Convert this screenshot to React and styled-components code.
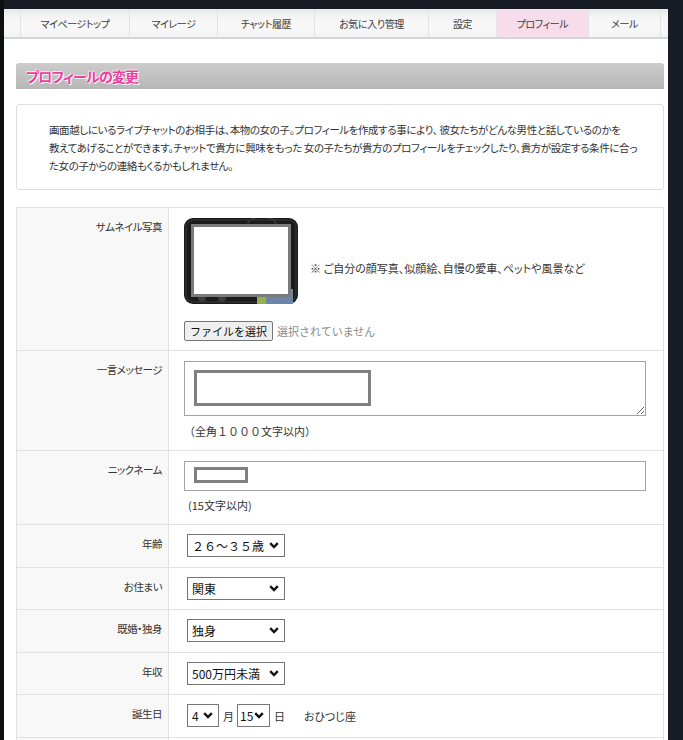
import React from "react";
import styled, { createGlobalStyle } from "styled-components";

const Global = createGlobalStyle`
  html, body { margin: 0; padding: 0; background: #161b24; }
  body { font-family: "Noto Sans CJK JP", "Noto Sans", sans-serif; color: #333; }
  * { box-sizing: border-box; }
`;

const chevron =
  "url(\"data:image/svg+xml;utf8,<svg xmlns='http://www.w3.org/2000/svg' width='10' height='7' viewBox='0 0 10 7'><path d='M1.2 1.2 L5 5 L8.8 1.2' fill='none' stroke='%23111' stroke-width='2.4'/></svg>\")";

const Frame = styled.div`
  min-height: 740px;
  padding: 9px 15px 0 4px;
  background: linear-gradient(to right, #0e0f12 0, #0e0f12 4px, #161b24 4px);
`;

const Page = styled.div`
  background: #fff;
  width: 664px;
  min-height: 731px;
`;

const Nav = styled.nav`
  display: flex;
  height: 30px;
  padding-left: 16px;
  background: linear-gradient(#e6e8ea 0, #f3f3f3 25%, #f8f8f8 60%, #f4f4f4 100%);
  border-bottom: 2px solid #d3d7db;
`;

const Tab = styled.a`
  display: flex;
  align-items: center;
  justify-content: center;
  width: ${(p) => p.$w}px;
  border-left: 1px solid #e3e3e3;
  ${(p) => (p.$last ? "border-right: 1px solid #e3e3e3;" : "")}
  background: ${(p) => (p.$active ? "#f7dcec" : "transparent")};
  font-size: 10px;
  letter-spacing: -0.4px;
  color: #444;
  text-decoration: none;
  font-feature-settings: "palt";
  text-shadow: 0 0 1px rgba(0, 0, 0, 0.08);
`;

const Content = styled.div`
  padding: 24px 4px 0 12px;
`;

const TitleBar = styled.h2`
  margin: 0;
  height: 26px;
  line-height: 26px;
  padding-left: 10px;
  border-radius: 3px 3px 0 0;
  background: linear-gradient(#cbcbcb, #b7b7b7);
  font-size: 14px;
  font-weight: bold;
  letter-spacing: -0.8px;
  color: #ef3c9e;
  font-feature-settings: "palt";
  text-shadow: 0 0 1px #fff, 0 0 1px #fff, 1px 1px 0 #fff, -1px -1px 0 rgba(255,255,255,0.6);
`;

const Intro = styled.div`
  margin-top: 15px;
  border: 1px solid #dedede;
  border-radius: 3px;
  padding: 16px 20px 14px 32px;
  font-size: 10.5px;
  letter-spacing: -0.4px;
  line-height: 18px;
  color: #333;
  font-feature-settings: "palt";
  white-space: nowrap;
`;

const FormTable = styled.div`
  margin-top: 17px;
  border: 1px solid #e0e0e0;
  border-top: none;
`;

const Row = styled.div`
  display: grid;
  grid-template-columns: 152px 1fr;
  border-top: 1px solid #e2e2e2;
`;

const Label = styled.div`
  background: #f8f8f8;
  border-right: 1px solid #e2e2e2;
  text-align: right;
  padding: 12px 6px 0 0;
  font-size: 10.5px;
  letter-spacing: -0.5px;
  line-height: 14px;
  color: #333;
  font-feature-settings: "palt";
`;

const Value = styled.div`
  padding: ${(p) => p.$pad};
  font-size: 11px;
  color: #333;
`;

const PhotoLine = styled.div`
  display: flex;
  align-items: center;
`;

const PhotoNote = styled.span`
  margin-left: 12px;
  margin-top: 14px;
  font-size: 11px;
  font-feature-settings: "palt";
`;

const FileLine = styled.div`
  margin-top: 17px;
  display: flex;
  align-items: center;
  height: 20px;
`;

const FileButton = styled.button`
  height: 20px;
  padding: 0 5px;
  border: 1px solid #767676;
  border-radius: 2px;
  background: #efefef;
  font-family: inherit;
  font-size: 11px;
  line-height: 18px;
  color: #111;
`;

const FileStatus = styled.span`
  margin-left: 4px;
  font-size: 11px;
  color: #8a8a8a;
`;

const FieldWrap = styled.div`
  position: relative;
  width: 462px;
`;

const TextArea = styled.textarea`
  display: block;
  width: 100%;
  height: 55px;
  border: 1px solid #a3a3a3;
  border-radius: 0;
  font-family: inherit;
  resize: vertical;
`;

const TextInput = styled.input`
  display: block;
  width: 100%;
  height: 30px;
  border: 1px solid #a3a3a3;
  border-radius: 0;
  font-family: inherit;
`;

const Redact = styled.div`
  position: absolute;
  left: ${(p) => p.$l}px;
  top: ${(p) => p.$t}px;
  width: ${(p) => p.$w}px;
  height: ${(p) => p.$h}px;
  border: 3px solid #808080;
  background: #fff;
`;

const Note = styled.div`
  margin-top: ${(p) => p.$mt}px;
  padding-left: ${(p) => p.$pl || 0}px;
  font-size: 11px;
  line-height: 14px;
`;

const Select = styled.select`
  appearance: none;
  -webkit-appearance: none;
  height: 23px;
  width: ${(p) => p.$w}px;
  margin-left: ${(p) => p.$ml ?? 3}px;
  border: 1px solid #767676;
  border-radius: 0;
  background: #fff ${chevron} no-repeat right 5px center / 10px 7px;
  font-family: "Noto Sans CJK JP", "Noto Sans", sans-serif;
  font-size: 12px;
  color: #111;
  padding: 0 0 0 ${(p) => p.$pl ?? 4}px;
`;

const DateLine = styled.div`
  display: flex;
  align-items: center;
  font-size: 11px;
`;

const Unit = styled.span`
  margin: 0 3px 0 4px;
`;

const Sign = styled.span`
  margin-left: 16px;
  font-feature-settings: "palt";
`;

const Photo = () => (
  <svg width="114" height="86" viewBox="0 0 114 86">
    <rect x="0" y="0" width="114" height="86" rx="9" fill="#1b1b1b" />
    <rect x="2" y="2" width="110" height="82" rx="8" fill="none" stroke="#2a2a2a" strokeWidth="2" />
    <ellipse cx="78" cy="6" rx="14" ry="7" fill="none" stroke="#3a3a3a" strokeWidth="1.5" />
    <rect x="82" y="71" width="27" height="15" fill="#6c84a6" />
    <rect x="73" y="79" width="9" height="7" fill="#93b34a" />
    <circle cx="18" cy="80" r="4" fill="#3c3c3c" />
    <circle cx="38" cy="80" r="4" fill="#3c3c3c" />
    <rect x="8.5" y="7.5" width="97" height="70" fill="#fff" stroke="#7b7b7b" strokeWidth="3" />
  </svg>
);

const tabs = [
  ["マイページトップ", 109],
  ["マイレージ", 88],
  ["チャット履歴", 97],
  ["お気に入り管理", 114],
  ["設定", 68],
  ["プロフィール", 92, true],
  ["メール", 73],
];

const TALL = "10px 16px 12px 15px";
const COMPACT = "9px 15px 9.6px 15px";

export default function App() {
  return (
    <>
      <Global />
      <Frame>
        <Page>
          <Nav>
            {tabs.map(([t, w, a], i) => (
              <Tab key={t} $w={w} $active={a} $last={i === tabs.length - 1} href="#">
                {t}
              </Tab>
            ))}
          </Nav>
          <Content>
            <TitleBar>プロフィールの変更</TitleBar>
            <Intro>
              画面越しにいるライブチャットのお相手は、本物の女の子。プロフィールを作成する事により、 彼女たちがどんな男性と話しているのかを
              <br />
              教えてあげることができます。チャットで貴方に興味をもった 女の子たちが貴方のプロフィールをチェックしたり、貴方が設定する条件に合っ
              <br />
              た女の子からの連絡もくるかもしれません。
            </Intro>
            <FormTable>
              <Row>
                <Label>サムネイル写真</Label>
                <Value $pad="10px 16px 9px 15px">
                  <PhotoLine>
                    <Photo />
                    <PhotoNote>※ ご自分の顔写真、似顔絵、自慢の愛車、ペットや風景など</PhotoNote>
                  </PhotoLine>
                  <FileLine>
                    <FileButton type="button">ファイルを選択</FileButton>
                    <FileStatus>選択されていません</FileStatus>
                  </FileLine>
                </Value>
              </Row>
              <Row>
                <Label>一言メッセージ</Label>
                <Value $pad={TALL}>
                  <FieldWrap>
                    <TextArea defaultValue="" />
                    <Redact $l={10} $t={9} $w={177} $h={36} />
                  </FieldWrap>
                  <Note $mt={8} $pl={0}>（全角１０００文字以内）</Note>
                </Value>
              </Row>
              <Row>
                <Label>ニックネーム</Label>
                <Value $pad={TALL}>
                  <FieldWrap>
                    <TextInput type="text" defaultValue="" />
                    <Redact $l={10} $t={6} $w={54} $h={16} />
                  </FieldWrap>
                  <Note $mt={7} $pl={4}>(15文字以内)</Note>
                </Value>
              </Row>
              <Row>
                <Label>年齢</Label>
                <Value $pad={COMPACT}>
                  <Select $w={98} defaultValue="a">
                    <option value="a">２６～３５歳</option>
                  </Select>
                </Value>
              </Row>
              <Row>
                <Label>お住まい</Label>
                <Value $pad={COMPACT}>
                  <Select $w={98} defaultValue="a">
                    <option value="a">関東</option>
                  </Select>
                </Value>
              </Row>
              <Row>
                <Label>既婚・独身</Label>
                <Value $pad={COMPACT}>
                  <Select $w={98} defaultValue="a">
                    <option value="a">独身</option>
                  </Select>
                </Value>
              </Row>
              <Row>
                <Label>年収</Label>
                <Value $pad={COMPACT}>
                  <Select $w={98} defaultValue="a">
                    <option value="a">500万円未満</option>
                  </Select>
                </Value>
              </Row>
              <Row>
                <Label>誕生日</Label>
                <Value $pad={COMPACT}>
                  <DateLine>
                    <Select $w={32} defaultValue="4">
                      <option value="4">4</option>
                    </Select>
                    <Unit>月</Unit>
                    <Select $w={33} $ml={0} $pl={2} defaultValue="15">
                      <option value="15">15</option>
                    </Select>
                    <Unit>日</Unit>
                    <Sign>おひつじ座</Sign>
                  </DateLine>
                </Value>
              </Row>
              <Row>
                <Label>&nbsp;</Label>
                <Value $pad={COMPACT}>&nbsp;</Value>
              </Row>
            </FormTable>
          </Content>
        </Page>
      </Frame>
    </>
  );
}
